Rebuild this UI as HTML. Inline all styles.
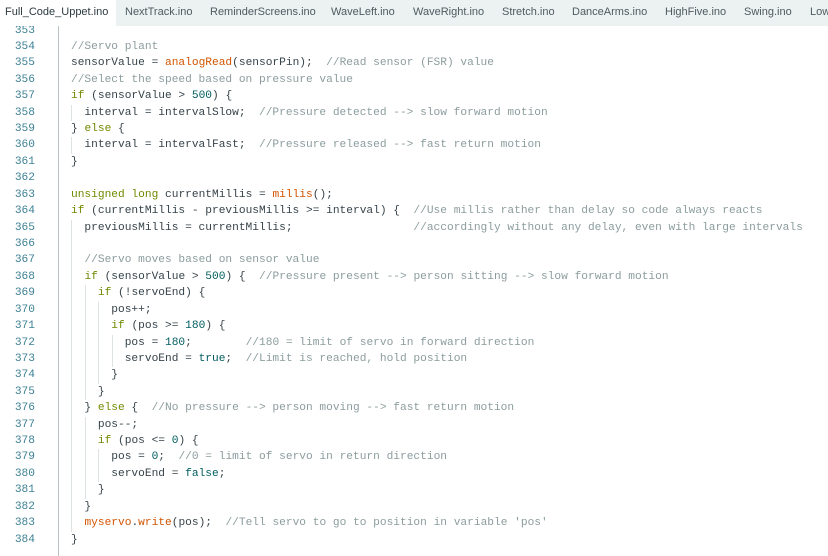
<!DOCTYPE html>
<html><head><style>
body{margin:0;width:828px;height:547px;overflow:hidden;background:#fff;position:relative;font-family:"Liberation Sans",sans-serif}
#tabs{position:absolute;top:0;left:0;width:828px;height:26px;background:#ecf1f1;z-index:2;font-size:11px;color:#4e5b61;white-space:nowrap}
#tabs span{position:absolute;top:6px}
#act{position:absolute;left:0;top:0;width:116px;height:26px;background:#fff}
#code{position:absolute;top:22.5px;left:0;width:828px;font-family:"Liberation Mono",monospace;font-size:11.2px;color:#36434a}
.l{height:16.43px;line-height:16.43px;position:relative;white-space:pre}
.n{position:absolute;left:0;width:35px;text-align:right;color:#3d8194}
.c{position:absolute;left:71px}
.g{position:absolute;top:0;height:16.43px;border-left:1px solid #dde3e4}
#gut{position:absolute;left:58px;top:26px;height:530px;border-left:1px solid #b8c2c5;z-index:1}
.k{color:#6f8a00}.m{color:#005c5f}.f{color:#d35400}.o{color:#8c9c9d}
</style></head><body>
<div id="tabs"><div id="act"></div>
<span style="left:5px;color:#2c3a3f">Full_Code_Uppet.ino</span>
<span style="left:125px">NextTrack.ino</span>
<span style="left:210px">ReminderScreens.ino</span>
<span style="left:331px">WaveLeft.ino</span>
<span style="left:413px">WaveRight.ino</span>
<span style="left:502px">Stretch.ino</span>
<span style="left:572px">DanceArms.ino</span>
<span style="left:665px">HighFive.ino</span>
<span style="left:744px">Swing.ino</span>
<span style="left:810px">Low</span>
</div>
<div id="gut"></div>
<div id="code">
<div class="l"><span class="n">353</span></div>
<div class="l"><span class="n">354</span><span class="c"><span class="o">//Servo plant</span></span></div>
<div class="l"><span class="n">355</span><span class="c">sensorValue = <span class="f">analogRead</span>(sensorPin);  <span class="o">//Read sensor (FSR) value</span></span></div>
<div class="l"><span class="n">356</span><span class="c"><span class="o">//Select the speed based on pressure value</span></span></div>
<div class="l"><span class="n">357</span><span class="c"><span class="k">if</span> (sensorValue &gt; <span class="m">500</span>) {</span></div>
<div class="l"><span class="n">358</span><i class="g" style="left:71px"></i><span class="c">  interval = intervalSlow;  <span class="o">//Pressure detected --&gt; slow forward motion</span></span></div>
<div class="l"><span class="n">359</span><span class="c">} <span class="k">else</span> {</span></div>
<div class="l"><span class="n">360</span><i class="g" style="left:71px"></i><span class="c">  interval = intervalFast;  <span class="o">//Pressure released --&gt; fast return motion</span></span></div>
<div class="l"><span class="n">361</span><span class="c">}</span></div>
<div class="l"><span class="n">362</span></div>
<div class="l"><span class="n">363</span><span class="c"><span class="k">unsigned</span> <span class="k">long</span> currentMillis = <span class="f">millis</span>();</span></div>
<div class="l"><span class="n">364</span><span class="c"><span class="k">if</span> (currentMillis - previousMillis &gt;= interval) {  <span class="o">//Use millis rather than delay so code always reacts</span></span></div>
<div class="l"><span class="n">365</span><i class="g" style="left:71px"></i><span class="c">  previousMillis = currentMillis;                  <span class="o">//accordingly without any delay, even with large intervals</span></span></div>
<div class="l"><span class="n">366</span><i class="g" style="left:71px"></i></div>
<div class="l"><span class="n">367</span><i class="g" style="left:71px"></i><span class="c">  <span class="o">//Servo moves based on sensor value</span></span></div>
<div class="l"><span class="n">368</span><i class="g" style="left:71px"></i><span class="c">  <span class="k">if</span> (sensorValue &gt; <span class="m">500</span>) {  <span class="o">//Pressure present --&gt; person sitting --&gt; slow forward motion</span></span></div>
<div class="l"><span class="n">369</span><i class="g" style="left:71px"></i><i class="g" style="left:85px"></i><span class="c">    <span class="k">if</span> (!servoEnd) {</span></div>
<div class="l"><span class="n">370</span><i class="g" style="left:71px"></i><i class="g" style="left:85px"></i><i class="g" style="left:98px"></i><span class="c">      pos++;</span></div>
<div class="l"><span class="n">371</span><i class="g" style="left:71px"></i><i class="g" style="left:85px"></i><i class="g" style="left:98px"></i><span class="c">      <span class="k">if</span> (pos &gt;= <span class="m">180</span>) {</span></div>
<div class="l"><span class="n">372</span><i class="g" style="left:71px"></i><i class="g" style="left:85px"></i><i class="g" style="left:98px"></i><i class="g" style="left:112px"></i><span class="c">        pos = <span class="m">180</span>;        <span class="o">//180 = limit of servo in forward direction</span></span></div>
<div class="l"><span class="n">373</span><i class="g" style="left:71px"></i><i class="g" style="left:85px"></i><i class="g" style="left:98px"></i><i class="g" style="left:112px"></i><span class="c">        servoEnd = <span class="m">true</span>;  <span class="o">//Limit is reached, hold position</span></span></div>
<div class="l"><span class="n">374</span><i class="g" style="left:71px"></i><i class="g" style="left:85px"></i><i class="g" style="left:98px"></i><span class="c">      }</span></div>
<div class="l"><span class="n">375</span><i class="g" style="left:71px"></i><i class="g" style="left:85px"></i><span class="c">    }</span></div>
<div class="l"><span class="n">376</span><i class="g" style="left:71px"></i><span class="c">  } <span class="k">else</span> {  <span class="o">//No pressure --&gt; person moving --&gt; fast return motion</span></span></div>
<div class="l"><span class="n">377</span><i class="g" style="left:71px"></i><i class="g" style="left:85px"></i><span class="c">    pos--;</span></div>
<div class="l"><span class="n">378</span><i class="g" style="left:71px"></i><i class="g" style="left:85px"></i><span class="c">    <span class="k">if</span> (pos &lt;= <span class="m">0</span>) {</span></div>
<div class="l"><span class="n">379</span><i class="g" style="left:71px"></i><i class="g" style="left:85px"></i><i class="g" style="left:98px"></i><span class="c">      pos = <span class="m">0</span>;  <span class="o">//0 = limit of servo in return direction</span></span></div>
<div class="l"><span class="n">380</span><i class="g" style="left:71px"></i><i class="g" style="left:85px"></i><i class="g" style="left:98px"></i><span class="c">      servoEnd = <span class="m">false</span>;</span></div>
<div class="l"><span class="n">381</span><i class="g" style="left:71px"></i><i class="g" style="left:85px"></i><span class="c">    }</span></div>
<div class="l"><span class="n">382</span><i class="g" style="left:71px"></i><span class="c">  }</span></div>
<div class="l"><span class="n">383</span><i class="g" style="left:71px"></i><span class="c">  <span class="f">myservo</span>.<span class="f">write</span>(pos);  <span class="o">//Tell servo to go to position in variable 'pos'</span></span></div>
<div class="l"><span class="n">384</span><span class="c">}</span></div>
</div>
</body></html>
